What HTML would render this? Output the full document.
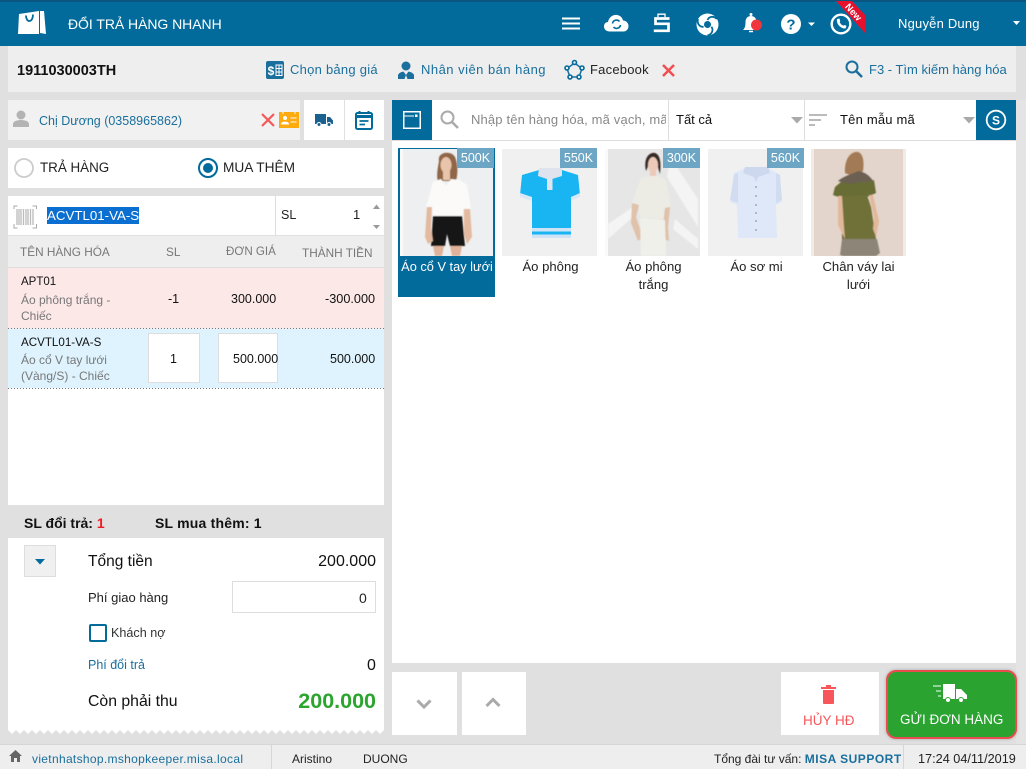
<!DOCTYPE html>
<html><head><meta charset="utf-8"><style>
*{box-sizing:border-box}
html,body{margin:0;padding:0;width:1026px;height:769px;overflow:hidden;background:#e0e0e0;font-family:"Liberation Sans",sans-serif;color:#111}
.a{position:absolute;white-space:nowrap}
.b{position:absolute}
.blue{color:#1a6f9c}
svg{position:absolute;overflow:visible}
.price{position:absolute;top:148px;width:37px;height:20px;background:#6ca6c4;color:#fff;font-size:12.5px;line-height:20px;text-align:center}
.pimg{position:absolute;top:149px;width:95px;height:107px;background:#f0f0f0;overflow:hidden}
.pn{position:absolute;width:95px;text-align:center;font-size:13.100px;line-height:18px;color:#222;top:258px}
.dot{position:absolute;left:8px;width:376px;height:1px;background:repeating-linear-gradient(90deg,#777 0,#777 1px,transparent 1px,transparent 3px)}
</style></head><body>
<svg width="0" height="0" style="left:0;top:0"><filter id="s"><feGaussianBlur stdDeviation="0.55"/></filter></svg>
<!-- header -->
<div class="b" style="left:0;top:0;width:1026px;height:46px;background:#026b9c;border-top:2px solid #0b5680"></div>
<svg style="left:18px;top:10px" width="30" height="27" viewBox="0 0 30 27"><path d="M1 4L21 1V24L0 24ZM22 1L26 1L28 24L22 23Z" fill="#fff"/><path d="M8 5.500C8 13 15 13 15 4.500" fill="none" stroke="#026b9c" stroke-width="1.800"/></svg>
<div class="a" style="left:68px;top:16px;font-size:14px;color:#fff;letter-spacing:-.05px">ĐỔI TRẢ HÀNG NHANH</div>
<svg style="left:562px;top:17px" width="18" height="13"><path d="M0 1.500H18M0 6.500H18M0 11.500H18" stroke="#fff" stroke-width="2"/></svg>
<svg style="left:604px;top:14px" width="25" height="18" viewBox="0 0 25 18"><path d="M6 17.500C2 17.500 0 15 0 12.500C0 9.500 2 8 4 8C5 3 9 0.500 13 1C16.500 1.500 18.500 4 19 6.500C22.500 6.500 24.500 9.500 24.500 12C24.500 15 22.500 17.500 19.500 17.500Z" fill="#fff"/><path d="M8.500 9.500A4 4 0 0 1 15.500 7.500M16.500 11A4 4 0 0 1 9.500 13" fill="none" stroke="#026b9c" stroke-width="1.600"/></svg>
<svg style="left:653px;top:13px" width="18" height="20" viewBox="0 0 18 20"><path d="M5 4V1.200H12V4" fill="none" stroke="#fff" stroke-width="1.300"/><path d="M16.500 5.500H2.500V10.800H15.500V17.800H0.800" fill="none" stroke="#fff" stroke-width="2.700"/></svg>
<svg style="left:696px;top:13px" width="23" height="23" viewBox="0 0 23 23"><circle cx="11.500" cy="11.500" r="11" fill="#fff"/><circle cx="11.500" cy="11.500" r="3.500" fill="#026b9c"/><g fill="none" stroke="#026b9c" stroke-width="1.800"><path d="M11.500 7C13 3.500 17.500 2.500 21 6"/><path d="M11.500 7C13 3.500 17.500 2.500 21 6" transform="rotate(120 11.500 11.500)"/><path d="M11.500 7C13 3.500 17.500 2.500 21 6" transform="rotate(240 11.500 11.500)"/></g></svg>
<svg style="left:742px;top:12px" width="22" height="22" viewBox="0 0 22 22"><path d="M1 18C3 16 3.500 14 3.500 10C3.500 6 6 4 9 4C12 4 14.500 6 14.500 10C14.500 14 15 16 17 18Z" fill="#fff"/><circle cx="9" cy="2.500" r="1.500" fill="#fff"/><path d="M7 19.500H11" stroke="#fff" stroke-width="1.500"/><circle cx="14.500" cy="13" r="5.500" fill="#f1353d"/></svg>
<svg style="left:781px;top:14px" width="35" height="20"><circle cx="10" cy="10" r="10" fill="#fff"/><text x="10" y="15.500" text-anchor="middle" font-size="15" font-weight="bold" fill="#026b9c" font-family="Liberation Sans">?</text><path d="M27 8.500H34L30.500 12Z" fill="#fff"/></svg>
<svg style="left:830px;top:0" width="36" height="36" viewBox="0 0 36 36"><path d="M6 1H22L35 15V33Z" fill="#e8112d"/><circle cx="11" cy="24" r="9.300" fill="none" stroke="#fff" stroke-width="2.400"/><path d="M7 19L9.500 18.500C10 20.500 10.500 21.500 9.800 22.200C10.500 24 12.500 25.500 13.500 25.500C14.200 24.800 15.200 25 16.500 26L15.500 28.500C11 29 6 24 7 19Z" fill="#fff"/><text x="0" y="0" transform="translate(14.500 7) rotate(48)" font-size="9.500" font-weight="bold" fill="#fff" font-family="Liberation Sans">New</text></svg>
<div class="a" style="left:898px;top:16px;font-size:13px;color:#fff;letter-spacing:.2px">Nguyễn Dung</div>
<svg style="left:1013px;top:21px" width="8" height="5"><path d="M0 0H7L3.500 4Z" fill="#fff"/></svg>

<!-- sub header -->
<div class="b" style="left:8px;top:46px;width:1008px;height:46px;background:#eee"></div>
<div class="a" style="left:17px;top:63px;font-size:14.500px;font-weight:bold;color:#111">1911030003TH</div>
<svg style="left:266px;top:61px" width="18" height="18" viewBox="0 0 18 18"><rect width="18" height="18" rx="2" fill="#1a6f9c"/><text x="5" y="14" text-anchor="middle" font-size="12" font-weight="bold" fill="#fff" font-family="Liberation Sans">$</text><path d="M10 4H16V14.500H10ZM13 4V14.500M10 7.500H16M10 11H16" fill="none" stroke="#fff" stroke-width="1"/></svg>
<div class="a blue" style="left:290px;top:62px;font-size:13px;letter-spacing:.25px">Chọn bảng giá</div>
<svg style="left:398px;top:61px" width="16" height="18" viewBox="0 0 16 18"><circle cx="8" cy="5" r="4.500" fill="#1a6f9c"/><path d="M0 18V14C1 11.500 4 11 5.500 10.500L8 14L10.500 10.500C12 11 15 11.500 16 14V18Z" fill="#1a6f9c"/><path d="M8 14L6.500 18H9.500Z" fill="#eee"/></svg>
<div class="a blue" style="left:421px;top:62px;font-size:13px;letter-spacing:.48px">Nhân viên bán hàng</div>
<svg style="left:564px;top:60px" width="21" height="20" viewBox="0 0 21 20"><path d="M10.500 3L18 8.500L15 17H6L3 8.500Z" fill="none" stroke="#1a6f9c" stroke-width="1.500"/><g fill="#eee" stroke="#026b9c" stroke-width="1.600"><circle cx="10.500" cy="2.500" r="2"/><circle cx="18" cy="8" r="2"/><circle cx="15" cy="17" r="2"/><circle cx="6" cy="17" r="2"/><circle cx="3" cy="8" r="2"/></g></svg>
<div class="a" style="left:590px;top:62px;font-size:13px;color:#222;letter-spacing:.22px">Facebook</div>
<svg style="left:662px;top:64px" width="13" height="13"><path d="M1 1L12 12M12 1L1 12" stroke="#f04e52" stroke-width="2.500"/></svg>
<svg style="left:845px;top:60px" width="18" height="18" viewBox="0 0 18 18"><circle cx="7" cy="7" r="5.500" fill="none" stroke="#1a6f9c" stroke-width="2"/><path d="M11 11L17 17" stroke="#1a6f9c" stroke-width="2.500"/></svg>
<div class="a blue" style="left:869px;top:62px;font-size:13px">F3 - Tìm kiếm hàng hóa</div>

<!-- customer -->
<div class="b" style="left:8px;top:100px;width:292px;height:40px;background:#f1f1f1"></div>
<svg style="left:13px;top:110px" width="16" height="18" viewBox="0 0 16 18"><circle cx="8" cy="5" r="4.500" fill="#b3b3b3"/><path d="M0 17V14C0 11 5 10 8 10C11 10 16 11 16 14V17Z" fill="#b3b3b3"/></svg>
<div class="a blue" style="left:39px;top:114px;font-size:12.500px">Chị Dương (0358965862)</div>
<svg style="left:261px;top:113px" width="14" height="14"><path d="M1 1L13 13M13 1L1 13" stroke="#f7575a" stroke-width="2.200"/></svg>
<svg style="left:279px;top:112px" width="20" height="16"><rect width="20" height="16" fill="#ffaa0d"/><circle cx="6" cy="6" r="2" fill="#fff"/><path d="M2.500 12C3 9.500 9 9.500 9.500 12ZM11.500 6H17.500M11.500 10H17.500" fill="#fff" stroke="#fff"/><path d="M4 0V2M16 0V2" stroke="#fff"/></svg>
<div class="b" style="left:304px;top:100px;width:40px;height:40px;background:#fff"></div>
<div class="b" style="left:345px;top:100px;width:39px;height:40px;background:#fff"></div>
<svg style="left:315px;top:114px" width="18" height="13" viewBox="0 0 18 13"><path d="M0 0H11V10H0ZM12 3H15L18 6.500V10H12Z" fill="#1a6190"/><circle cx="4" cy="10.500" r="2" fill="#1a6190" stroke="#fff"/><circle cx="14" cy="10.500" r="2" fill="#1a6190" stroke="#fff"/></svg>
<svg style="left:355px;top:110px" width="18" height="20" viewBox="0 0 18 20"><rect x="1" y="3" width="16" height="16" rx="1.500" fill="none" stroke="#026b9c" stroke-width="2"/><path d="M1 6.500H17" stroke="#026b9c" stroke-width="3"/><path d="M4.500 1V3M13.500 1V3" stroke="#026b9c" stroke-width="2"/><path d="M4.500 11H13.500M4.500 14.500H10" stroke="#026b9c" stroke-width="1.800"/></svg>

<!-- radios -->
<div class="b" style="left:8px;top:148px;width:376px;height:40px;background:#fff"></div>
<svg style="left:14px;top:158px" width="20" height="20"><circle cx="10" cy="10" r="9" fill="#fff" stroke="#ccc" stroke-width="1.800"/></svg>
<div class="a" style="left:40px;top:160px;font-size:13.400px;color:#222">TRẢ HÀNG</div>
<svg style="left:198px;top:158px" width="20" height="20"><circle cx="10" cy="10" r="9" fill="#fff" stroke="#026b9c" stroke-width="2"/><circle cx="10" cy="10" r="5" fill="#026b9c"/></svg>
<div class="a" style="left:223px;top:160px;font-size:13.700px;color:#222">MUA THÊM</div>

<!-- barcode -->
<div class="b" style="left:8px;top:196px;width:376px;height:39px;background:#fff"></div>
<div class="b" style="left:275px;top:196px;width:1px;height:39px;background:#ddd"></div>
<svg style="left:13px;top:205px" width="24" height="24" viewBox="0 0 24 24"><path d="M4.500 1H1V4M19.500 1H23.500V4M1 19V23H4.500M23.500 19V23H19.500" fill="none" stroke="#aaa" stroke-width="1"/><path d="M4 4V20M6 4V20M8 4V20M10.500 4V20M13 4V20M15 4V20M17.500 4V20M20 4V20" stroke="#bbb" stroke-width="1.300"/></svg>
<div class="a" style="left:47px;top:207px;height:17px;background:#0a6fd1;color:#fff;font-size:13.300px;line-height:17px">ACVTL01-VA-S</div>
<div class="a" style="left:281px;top:208px;font-size:12.500px;color:#222">SL</div>
<div class="a" style="left:353px;top:207px;font-size:13px;color:#222">1</div>
<svg style="left:372px;top:204px" width="9" height="26"><path d="M1 5L4.500 0.500L8 5Z M1 21H8L4.500 25Z" fill="#999"/></svg>

<!-- table -->
<div class="b" style="left:8px;top:236px;width:376px;height:31px;background:#eee"></div>
<div class="b" style="left:8px;top:267px;width:376px;height:1px;background:#ddd"></div>
<div class="a" style="left:20px;top:245px;font-size:11.800px;color:#777">TÊN HÀNG HÓA</div>
<div class="a" style="left:166px;top:245px;font-size:11.800px;color:#777">SL</div>
<div class="a" style="left:226px;top:245px;font-size:11.600px;color:#777">ĐƠN GIÁ</div>
<div class="a" style="left:302px;top:246px;font-size:11.800px;color:#777">THÀNH TIỀN</div>
<div class="b" style="left:8px;top:268px;width:376px;height:60px;background:#fde8e8"></div>
<div class="b" style="left:8px;top:329px;width:376px;height:59px;background:#def3fd"></div>
<div class="b" style="left:8px;top:328px;width:376px;height:1px;background:#f2eef2"></div>
<div class="dot" style="top:328px"></div>
<div class="b" style="left:8px;top:388px;width:376px;height:117px;background:#fff"></div>
<div class="dot" style="top:388px"></div>
<div class="a" style="left:21px;top:276px;font-size:11.500px;color:#111">APT01</div>
<div class="a" style="left:21px;top:292px;font-size:12px;line-height:16px;color:#777">Áo phông trắng -<br>Chiếc</div>
<div class="a" style="left:168px;top:292px;font-size:12.500px;color:#111">-1</div>
<div class="a" style="left:231px;top:292px;font-size:12.500px;color:#111">300.000</div>
<div class="a" style="left:325px;top:292px;font-size:12.700px;color:#111">-300.000</div>
<div class="a" style="left:21px;top:336px;font-size:11.600px;color:#111">ACVTL01-VA-S</div>
<div class="a" style="left:21px;top:352px;font-size:12px;line-height:16px;color:#777">Áo cổ V tay lưới<br>(Vàng/S) - Chiếc</div>
<div class="b" style="left:148px;top:333px;width:52px;height:50px;background:#fff;border:1px solid #ddd"></div>
<div class="a" style="left:170px;top:352px;font-size:12.500px;color:#111">1</div>
<div class="b" style="left:218px;top:333px;width:60px;height:50px;background:#fff;border:1px solid #ddd"></div>
<div class="a" style="left:233px;top:352px;font-size:12.500px;color:#111">500.000</div>
<div class="a" style="left:330px;top:352px;font-size:12.500px;color:#111">500.000</div>

<!-- totals -->
<div class="a" style="left:24px;top:515px;font-size:14px;font-weight:bold;color:#111">SL đổi trả: <span style="color:#ee1c25">1</span></div>
<div class="a" style="left:155px;top:515px;font-size:14px;font-weight:bold;color:#111;letter-spacing:.2px">SL mua thêm: 1</div>
<div class="b" style="left:8px;top:538px;width:376px;height:192px;background:#fff"></div>
<svg style="left:8px;top:729px" width="376" height="6"><path d="M0 0V1L4 5L8 1L12 5L16 1L20 5L24 1L28 5L32 1L36 5L40 1L44 5L48 1L52 5L56 1L60 5L64 1L68 5L72 1L76 5L80 1L84 5L88 1L92 5L96 1L100 5L104 1L108 5L112 1L116 5L120 1L124 5L128 1L132 5L136 1L140 5L144 1L148 5L152 1L156 5L160 1L164 5L168 1L172 5L176 1L180 5L184 1L188 5L192 1L196 5L200 1L204 5L208 1L212 5L216 1L220 5L224 1L228 5L232 1L236 5L240 1L244 5L248 1L252 5L256 1L260 5L264 1L268 5L272 1L276 5L280 1L284 5L288 1L292 5L296 1L300 5L304 1L308 5L312 1L316 5L320 1L324 5L328 1L332 5L336 1L340 5L344 1L348 5L352 1L356 5L360 1L364 5L368 1L372 5L376 1V0Z" fill="#fff"/></svg>
<div class="b" style="left:24px;top:545px;width:32px;height:32px;background:#f0f0f0;border:1px solid #ddd"></div>
<svg style="left:35px;top:559px" width="10" height="6"><path d="M0 0H10L5 5.500Z" fill="#026b9c"/></svg>
<div class="a" style="left:88px;top:553px;font-size:15.500px;color:#111">Tổng tiền</div>
<div class="a" style="right:650px;top:553px;font-size:16px;color:#111">200.000</div>
<div class="a" style="left:88px;top:590px;font-size:13px;color:#222">Phí giao hàng</div>
<div class="b" style="left:232px;top:581px;width:144px;height:32px;background:#fff;border:1px solid #ddd"></div>
<div class="a" style="left:359px;top:590px;font-size:14px;color:#222">0</div>
<div class="b" style="left:89px;top:624px;width:18px;height:18px;background:#fff;border:2px solid #026b9c;border-radius:2px"></div>
<div class="a" style="left:111px;top:626px;font-size:12.600px;color:#333">Khách nợ</div>
<div class="a blue" style="left:88px;top:658px;font-size:12.500px">Phí đổi trả</div>
<div class="a" style="left:367px;top:657px;font-size:16px;color:#111">0</div>
<div class="a" style="left:88px;top:693px;font-size:15.800px;color:#111">Còn phải thu</div>
<div class="a" style="right:650px;top:689px;font-size:21.500px;font-weight:bold;color:#2ca52f">200.000</div>

<!-- toolbar right -->
<div class="b" style="left:392px;top:100px;width:624px;height:40px;background:#fff"></div>
<div class="b" style="left:392px;top:140px;width:624px;height:1px;background:#ddd"></div>
<div class="b" style="left:392px;top:100px;width:40px;height:40px;background:#026b9c"></div>
<svg style="left:403px;top:111px" width="18" height="18"><rect x=".75" y=".75" width="16.500" height="16.500" fill="none" stroke="#fff" stroke-width="1.500"/><path d="M1 5H11" stroke="#fff"/><rect x="12" y="3.500" width="2.500" height="2.500" fill="#fff"/></svg>
<svg style="left:440px;top:110px" width="19" height="19" viewBox="0 0 19 19"><circle cx="7.500" cy="7.500" r="6" fill="none" stroke="#aaa" stroke-width="2"/><path d="M12 12L18 18" stroke="#aaa" stroke-width="2.500"/></svg>
<div class="b" style="left:471px;top:112px;width:195px;overflow:hidden;white-space:nowrap;font-size:13px;color:#888;letter-spacing:.15px">Nhập tên hàng hóa, mã vạch, mã vạch</div>
<div class="b" style="left:668px;top:100px;width:1px;height:40px;background:#ddd"></div>
<div class="a" style="left:676px;top:112px;font-size:13px;color:#111">Tất cả</div>
<svg style="left:791px;top:117px" width="12" height="7"><path d="M0 0H12L6 6.500Z" fill="#aaa"/></svg>
<div class="b" style="left:804px;top:100px;width:1px;height:40px;background:#ddd"></div>
<svg style="left:809px;top:114px" width="18" height="13"><path d="M0 1H18M0 6H12M0 11H6" stroke="#bbb" stroke-width="2"/></svg>
<div class="a" style="left:840px;top:112px;font-size:13px;color:#111;letter-spacing:.2px">Tên mẫu mã</div>
<svg style="left:963px;top:117px" width="12" height="7"><path d="M0 0H12L6 6.500Z" fill="#aaa"/></svg>
<div class="b" style="left:976px;top:100px;width:40px;height:40px;background:#026b9c"></div>
<svg style="left:985px;top:109px" width="22" height="22"><circle cx="11" cy="11" r="9.300" fill="none" stroke="#fff" stroke-width="1.800"/><text x="11" y="15.500" text-anchor="middle" font-size="12" font-weight="bold" fill="#fff" font-family="Liberation Sans">S</text></svg>

<!-- grid -->
<div class="b" style="left:392px;top:141px;width:624px;height:522px;background:#fff"></div>
<div class="b" style="left:1016px;top:100px;width:10px;height:644px;background:#e4e4e4"></div>
<div class="b" style="left:398px;top:148px;width:97px;height:149px;background:#026b9c"></div>

<div class="pimg" style="left:400px;width:93px">
<svg style="left:0;top:0" width="93" height="107" viewBox="0 0 93 107"><rect width="93" height="107" fill="#eeeff0"/><rect width="3" height="107" fill="#f9f9f9"/><g filter="url(#s)"><path d="M39 12C37 3 51 1 55 8C58 15 58 25 56 32H38C36 27 38 18 39 12Z" fill="#8f6647"/><ellipse cx="46" cy="16" rx="5.500" ry="8" fill="#e8c4ab"/><path d="M43 22H50V31H43Z" fill="#e8c4ab"/><path d="M33 33L41 30L46 37L51 30L60 31L67 36L71 60L63 60L62 67H33L32 58L26 58Z" fill="#fbfaf9"/><path d="M33 67H62L65 97H50L47 85L45 97H31Z" fill="#141416"/><path d="M33 97H44L42 107H35ZM50 97H62L60 107H52Z" fill="#dfb299"/><path d="M27 58H32L31 78L33 92L28 95L25 88ZM64 60H70L72 88L67 95L64 85Z" fill="#e3ba9f"/></g></svg></div>
<div class="price" style="left:457px">500K</div>
<div class="pn" style="left:398px;width:97px;color:#fff;white-space:nowrap;font-size:12.800px;padding-left:1px">Áo cổ V tay lưới</div>

<div class="pimg" style="left:502px">
<svg style="left:0;top:0" width="95" height="107" viewBox="0 0 95 107"><rect width="95" height="107" fill="#f0f0f0"/><path d="M37 21L20 26L18 46L30 48L30 88H69V48L78 46L76 26L60 21Z" fill="#19b5f3"/><path d="M18 44L30 48V52L18 48ZM78 44L69 48V52L78 48Z" fill="#dce7f5"/><path d="M30 79H69V82.500H30ZM30 85.500H69V89H30Z" fill="#cfe3f6"/><path d="M37 19H60L60 27L50 30H45L36 27Z" fill="#dfe3ed"/><rect x="45" y="29" width="5.500" height="12" fill="#dfe5f0"/></svg></div>
<div class="price" style="left:560px">550K</div>
<div class="pn" style="left:503px">Áo phông</div>

<div class="pimg" style="left:605px">
<svg style="left:0;top:0" width="95" height="107" viewBox="0 0 95 107"><rect width="95" height="107" fill="#e6e6e6"/><rect width="3" height="107" fill="#fafafa"/><g filter="url(#s)"><path d="M3 75L28 58V68L3 90ZM65 8L93 50V78L62 28ZM70 70L93 90V100L68 80Z" fill="#f4f4f4"/><path d="M41 22C38 8 45 3 50 4C56 6 56 16 55 25L51 12L45 13Z" fill="#362a26"/><ellipse cx="48" cy="16" rx="5" ry="8" fill="#edc9b8"/><path d="M45 22H51V29H45Z" fill="#edc9b8"/><path d="M36 29L45 27L53 27L61 31L66 58L59 59L60 70L35 68L34 56L27 54Z" fill="#ecece4"/><path d="M27 54L34 56L31 68L38 88L33 92L26 74ZM60 59L65 58L63 78L64 92L59 90L58 76Z" fill="#e0c1a9"/><path d="M35 69L60 71L61 107H36Z" fill="#f0f0ea"/></g></svg></div>
<div class="price" style="left:663px">300K</div>
<div class="pn" style="left:606px">Áo phông<br>trắng</div>

<div class="pimg" style="left:708px">
<svg style="left:0;top:0" width="95" height="107" viewBox="0 0 95 107"><rect width="95" height="107" fill="#f0f0f0"/><path d="M37 19L26 24L22 53L29 56L30 89H69L68 56L74 53L72 26L60 19Z" fill="#dfe8f8"/><path d="M37 18H60L62 24L50 28L48 33L46 28L35 24Z" fill="#cdd8ee"/><path d="M26 26L30 24L30 54L22 51ZM72 26L68 24L68 54L74 51Z" fill="#d2dcf0"/><g fill="#9ba9c4"><circle cx="48" cy="38" r="1"/><circle cx="48" cy="47" r="1"/><circle cx="48" cy="56" r="1"/><circle cx="48" cy="64" r="1"/><circle cx="48" cy="72" r="1"/><circle cx="48" cy="81" r="1"/></g></svg></div>
<div class="price" style="left:767px">560K</div>
<div class="pn" style="left:709px">Áo sơ mi</div>

<div class="pimg" style="left:811px">
<svg style="left:0;top:0" width="95" height="107" viewBox="0 0 95 107"><rect width="95" height="107" fill="#e3d5cb"/><rect width="3" height="107" fill="#f2ebe5"/><rect x="92" width="3" height="107" fill="#f2ebe5"/><g filter="url(#s)"><path d="M34 24C33 10 40 2 47 3C53 5 53 15 52 22L44 28Z" fill="#a27a54"/><path d="M27 32C34 26 42 25 47 22C54 23 59 27 62 32L55 36H38Z" fill="#6c6152"/><path d="M24 38L30 33L40 35L48 33L57 33L63 31L65 44L56 48L40 47L30 49L22 46Z" fill="#676c35"/><path d="M31 47L56 46L60 58L65 90L31 92Z" fill="#6f7139"/><path d="M27 47L31 47L33 78L34 90L27 76ZM58 46L62 46L68 72L65 88L62 80L63 68Z" fill="#e2b89a"/><path d="M31 90H66L69 104L65 107H32L29 106Z" fill="#8d8577"/></g></svg></div>
<div class="pn" style="left:811px">Chân váy lai<br>lưới</div>

<!-- bottom -->
<div class="b" style="left:392px;top:672px;width:65px;height:63px;background:#fff"></div>
<div class="b" style="left:462px;top:672px;width:64px;height:63px;background:#fff"></div>
<svg style="left:416px;top:699px" width="16" height="10"><path d="M1.500 1.500L8 8L14.500 1.500" fill="none" stroke="#aaa" stroke-width="3"/></svg>
<svg style="left:485px;top:698px" width="16" height="10"><path d="M1.500 8L8 1.500L14.500 8" fill="none" stroke="#aaa" stroke-width="3"/></svg>
<div class="b" style="left:781px;top:672px;width:98px;height:63px;background:#fff"></div>
<svg style="left:820px;top:684px" width="17" height="20"><path d="M1 3H16V5H1ZM6 1H11V3H6ZM3 6H14V19C14 20 13 20 12 20H5C4 20 3 20 3 19Z" fill="#f7575a"/></svg>
<div class="a" style="left:803px;top:713px;font-size:13.500px;color:#f7575a">HỦY HĐ</div>
<div class="b" style="left:886px;top:670px;width:131px;height:69px;border:2px solid #ea4d4f;border-radius:10px;background:#2aa330;box-shadow:0 0 3px rgba(0,0,0,.25)"></div>
<svg style="left:933px;top:684px" width="36" height="20" viewBox="0 0 36 20"><path d="M0 2H8M3 7H8M5 12H8" stroke="#fff" stroke-width="1"/><path d="M10 0H22V15H10ZM23 5H28L34 11V15H23Z" fill="#fff"/><circle cx="15" cy="16" r="2.500" fill="#fff" stroke="#2aa330"/><circle cx="28" cy="16" r="2.500" fill="#fff" stroke="#2aa330"/></svg>
<div class="a" style="left:900px;top:712px;font-size:13.500px;color:#fff">GỬI ĐƠN HÀNG</div>

<!-- status bar -->
<div class="b" style="left:0;top:744px;width:1026px;height:25px;background:#eee;border-top:1px solid #d6d6d6"></div>
<div class="b" style="left:271px;top:745px;width:1px;height:24px;background:#d6d6d6"></div>
<div class="b" style="left:903px;top:745px;width:1px;height:24px;background:#d6d6d6"></div>
<svg style="left:9px;top:750px" width="13" height="12"><path d="M6.500 0L13 6H11V12H8V8H5V12H2V6H0Z" fill="#666"/></svg>
<div class="a blue" style="left:32px;top:752px;font-size:12px;letter-spacing:.32px">vietnhatshop.mshopkeeper.misa.local</div>
<div class="a" style="left:292px;top:752px;font-size:12px;color:#222">Aristino</div>
<div class="a" style="left:363px;top:752px;font-size:12px;color:#222">DUONG</div>
<div class="a" style="left:714px;top:752px;font-size:12px;color:#222">Tổng đài tư vấn: <b style="color:#1a6f9c;letter-spacing:.5px">MISA SUPPORT</b></div>
<div class="a" style="left:918px;top:752px;font-size:12.700px;color:#222">17:24 04/11/2019</div>
</body></html>
